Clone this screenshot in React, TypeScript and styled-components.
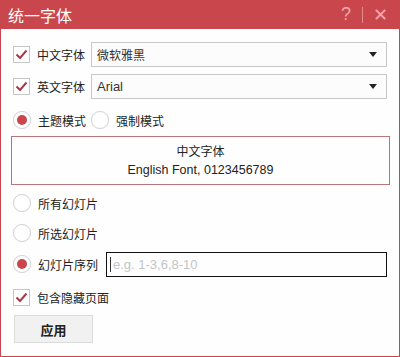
import styled, { createGlobalStyle } from 'styled-components';

const Global = createGlobalStyle`
  html, body {
    margin: 0;
    padding: 0;
    background: #ffffff;
  }
  * {
    box-sizing: border-box;
  }
`;

const Window = styled.div`
  width: 400px;
  height: 357px;
  border: 1px solid #c9474c;
  border-top: none;
  background: #fefefe;
  font-family: 'Noto Sans CJK SC', 'Liberation Sans', sans-serif;
  font-size: 12px;
  color: #222;
  display: flex;
  flex-direction: column;
`;

const TitleBar = styled.div`
  height: 29px;
  margin: 0 -1px;
  background: #c9474c;
  display: flex;
  align-items: center;
  padding: 0 10px 0 8px;
  color: #fff;
`;

const Title = styled.div`
  flex: 1;
  font-size: 16px;
`;

const TitleButton = styled.span`
  font-family: 'Liberation Sans', sans-serif;
  font-size: 18px;
  color: #f2a9ac;
  width: 20px;
  text-align: center;
`;

const Sep = styled.span`
  width: 1px;
  height: 16px;
  background: #e08a8e;
  margin: 0 7px 0 6px;
`;

const Body = styled.div`
  padding: 13px 12px 0 12px;
  display: flex;
  flex-direction: column;
`;

const Row = styled.div<{ $mt?: number; $h?: number }>`
  display: flex;
  align-items: center;
  height: ${(p) => p.$h ?? 25}px;
  margin-top: ${(p) => p.$mt ?? 0}px;
`;

const Box = styled.span`
  width: 17px;
  height: 17px;
  border: 1px solid #c6c6c6;
  background: #fff;
  display: inline-flex;
  align-items: center;
  justify-content: center;
  flex: none;
`;

const Radio = styled.span<{ $on?: boolean }>`
  width: 18px;
  height: 18px;
  border-radius: 50%;
  border: 1px solid #d4d4d4;
  box-shadow: 0 0 1px #dfe8ef;
  background: #fff;
  display: inline-flex;
  align-items: center;
  justify-content: center;
  flex: none;
  &::after {
    content: '';
    width: 10px;
    height: 10px;
    border-radius: 50%;
    background: ${(p) => (p.$on ? '#c9474c' : 'transparent')};
  }
`;

const Label = styled.span<{ $w?: number }>`
  margin-left: 7px;
  width: ${(p) => (p.$w ? `${p.$w}px` : 'auto')};
  flex: none;
  color: #222;
`;

const Select = styled.div`
  flex: 1;
  height: 25px;
  border: 1px solid #c8c8c8;
  background: #fcfcfc;
  display: flex;
  align-items: center;
  padding: 0 9px 0 5px;
  color: #333;
`;

const SelectText = styled.span<{ $latin?: boolean }>`
  flex: 1;
  font-family: ${(p) =>
    p.$latin ? "'Liberation Sans', sans-serif" : "'Noto Sans CJK SC', sans-serif"};
  font-size: ${(p) => (p.$latin ? 13 : 12)}px;
`;

const Arrow = styled.span`
  width: 0;
  height: 0;
  border-left: 4px solid transparent;
  border-right: 4px solid transparent;
  border-top: 5px solid #222;
`;

const Preview = styled.div`
  margin: 3px 0 0 -2px;
  width: 379px;
  height: 49px;
  border: 1px solid #b9767a;
  display: flex;
  flex-direction: column;
  align-items: center;
  justify-content: center;
  gap: 3px;
  line-height: 17px;
`;

const PreviewLatin = styled.span`
  font-family: 'Liberation Sans', sans-serif;
  font-size: 12.5px;
`;

const Input = styled.div`
  flex: 1;
  height: 25px;
  margin-left: 8px;
  border: 1px solid #111;
  display: flex;
  align-items: center;
  padding-left: 3px;
  font-family: 'Liberation Sans', sans-serif;
  color: #c4c4c4;
  font-size: 13px;
`;

const Caret = styled.span`
  width: 1px;
  height: 15px;
  background: #333;
  margin-right: 2px;
`;

const Button = styled.div`
  width: 79px;
  height: 28px;
  margin-top: 3px;
  margin-left: 1px;
  background: #f1f1f1;
  border: 1px solid #dcdcdc;
  display: flex;
  align-items: center;
  justify-content: center;
  font-weight: 700;
  font-size: 13px;
  color: #222;
`;

function Check() {
  return (
    <Box>
      <svg width="13" height="11" viewBox="0 0 13 11">
        <path d="M1.5 5.5 L5 9 L11.5 1.5" fill="none" stroke="#a83a48" strokeWidth="2" />
      </svg>
    </Box>
  );
}

export default function App() {
  return (
    <Window>
      <Global />
      <TitleBar>
        <Title>统一字体</Title>
        <TitleButton>?</TitleButton>
        <Sep />
        <TitleButton>✕</TitleButton>
      </TitleBar>
      <Body>
        <Row>
          <Check />
          <Label $w={54}>中文字体</Label>
          <Select>
            <SelectText>微软雅黑</SelectText>
            <Arrow />
          </Select>
        </Row>
        <Row $mt={7}>
          <Check />
          <Label $w={54}>英文字体</Label>
          <Select>
            <SelectText $latin>Arial</SelectText>
            <Arrow />
          </Select>
        </Row>
        <Row $mt={8} $h={26}>
          <Radio $on />
          <Label $w={53}>主题模式</Label>
          <Radio />
          <Label>强制模式</Label>
        </Row>
        <Preview>
          <span>中文字体</span>
          <PreviewLatin>English Font, 0123456789</PreviewLatin>
        </Preview>
        <Row $mt={3} $h={30}>
          <Radio />
          <Label>所有幻灯片</Label>
        </Row>
        <Row $h={30}>
          <Radio />
          <Label>所选幻灯片</Label>
        </Row>
        <Row $h={32}>
          <Radio $on />
          <Label>幻灯片序列</Label>
          <Input>
            <Caret />
            e.g. 1-3,6,8-10
          </Input>
        </Row>
        <Row $mt={2} $h={30}>
          <Check />
          <Label>包含隐藏页面</Label>
        </Row>
        <Button>应用</Button>
      </Body>
    </Window>
  );
}
